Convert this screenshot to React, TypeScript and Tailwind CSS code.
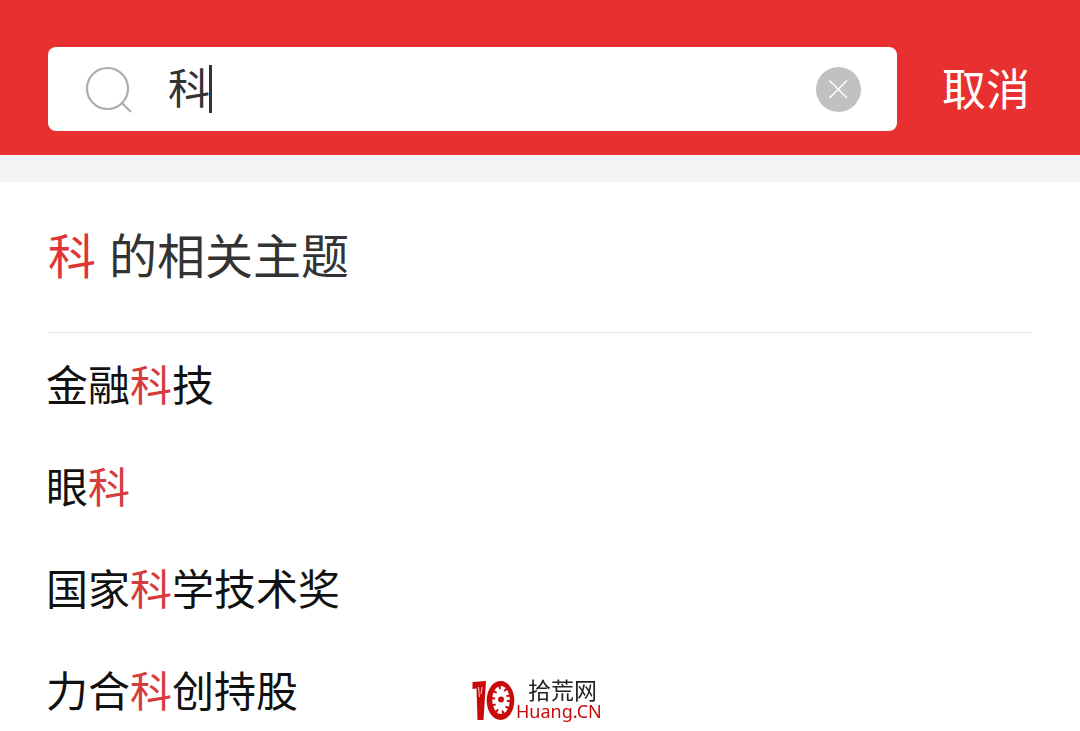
import React, { useState } from 'react';

// ==========================================
// MOCK DATA
// ==========================================
const TOPICS = ["金融科技", "眼科", "国家科学技术奖", "力合科创持股"];

function Highlight({ text, keyword }: { text: string; keyword: string }) {
  if (!keyword) return <>{text}</>;
  return (
    <>
      {text.split(keyword).map((part, i) => (
        <React.Fragment key={i}>
          {i > 0 && <span className="text-[#d73c3c]">{keyword}</span>}
          {part}
        </React.Fragment>
      ))}
    </>
  );
}

function SiteMark() {
  return (
    <a href="#home" className="fixed bottom-2.5 left-[472px] flex items-end text-[#c80a0a]">
      {/* Digit and gear wheel */}
      <svg viewBox="0 0 44 42" className="h-[42px] w-[44px]" aria-hidden="true">
        <path d="M0.5 3 L14 2 L11.5 41 H5.5 L4.5 9.5 L0.5 10 Z" fill="currentColor" />
        <path d="M6.5 8 L7.5 18 M10 8 L9 15" stroke="#fff" strokeWidth="0.8" />
        <ellipse cx="28.5" cy="21.5" rx="13.8" ry="19.5" fill="currentColor" />
        <ellipse cx="29" cy="21" rx="8.8" ry="14" fill="#fff" />
        <ellipse cx="29" cy="21" rx="7.6" ry="12.5" fill="none" stroke="currentColor" strokeWidth="3.5" strokeDasharray="2 4.5" />
        <circle cx="29" cy="20.5" r="3" fill="currentColor" />
      </svg>
      <span className="flex flex-col">
        <span className="pl-3 text-[23px] leading-[24px] text-[#222]">拾荒网</span>
        <span className="font-['Noto_Sans','Noto_Sans_CJK_SC',sans-serif] text-[18px] leading-[20px]">Huang.CN</span>
      </span>
    </a>
  );
}

export default function TopicSearchPage() {
  const [query, setQuery] = useState("科");

  const topics = TOPICS.filter(topic => topic.includes(query));

  return (
    <div className="min-h-screen bg-white font-['Noto_Sans_CJK_SC',sans-serif]">

      {/* Search header */}
      <header className="flex items-center gap-[45px] bg-[#e83030] pt-[47px] pb-6 pl-12 pr-[50px]">
        <div className="flex h-[84px] min-w-0 flex-1 items-center rounded-lg bg-white px-9">
          <label htmlFor="query" className="mr-9 shrink-0">
            <svg viewBox="0 0 48 48" className="h-12 w-12" fill="none" stroke="#adadad" strokeWidth="2.2" role="img" aria-label="搜索">
              <circle cx="23.5" cy="23.5" r="20.5" />
              <path d="M38 38 L47 47" />
            </svg>
          </label>
          <input
            id="query" type="text" value={query} onChange={(e) => setQuery(e.target.value)}
            className="field-sizing-content h-[68px] min-w-0 bg-transparent pb-2 text-[42px] text-[#333] caret-transparent outline-none"
          />
          <span className="-ml-px h-12 w-[3px] shrink-0 bg-[#333]" />
          <button type="button" aria-label="清除" onClick={() => setQuery("")} className="ml-auto shrink-0">
            <svg viewBox="0 0 45 45" className="h-[45px] w-[45px]">
              <circle cx="22.5" cy="22.5" r="22.5" fill="#c1c1c1" />
              <path d="M13.5 13.5 L31 31 M31 13.5 L13.5 31" stroke="#fff" strokeWidth="1.5" />
            </svg>
          </button>
        </div>
        <button type="button" className="shrink-0 pb-1 text-[44px] leading-[60px] text-white">取消</button>
      </header>

      <div className="h-[27px] bg-[#f4f4f4]" />

      {/* Related topics */}
      <main className="px-12">
        <h1 className="flex h-[151px] items-center gap-[13px] border-b border-[#e0e0e0] pb-2 text-[48px] text-[#333]">
          <span className="text-[#e03535]">{query}</span>
          <span>的相关主题</span>
        </h1>
        <ul className="-mx-0.5">
          {topics.map(topic => (
            <li key={topic}>
              <a href="#topic" className="flex h-[102px] items-center pb-1 text-[42px] text-[#111]">
                <span><Highlight text={topic} keyword={query} /></span>
              </a>
            </li>
          ))}
        </ul>
      </main>

      <SiteMark />
    </div>
  );
}
